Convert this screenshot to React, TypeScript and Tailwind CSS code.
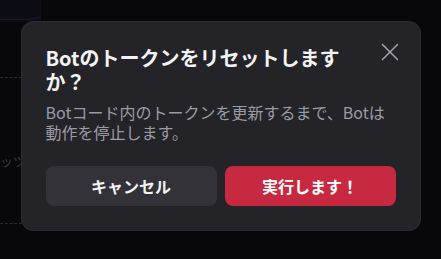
import { X } from 'lucide-react';

export default function App() {
  return (
    <div
      className="relative w-[441px] h-[259px] overflow-hidden bg-[#08080a]"
      style={{ fontFamily: '"Noto Sans CJK JP", "Noto Sans", sans-serif' }}
    >
      {/* faint page behind the backdrop */}
      <div className="absolute inset-y-0 left-0 w-[22px] flex flex-col">
        <div className="relative w-[41px] h-[22px] bg-[#0b0d14] overflow-hidden">
          <div className="absolute left-[-60px] top-[-70px] w-[130px] h-[90px] rounded-full border border-[#1a1e2c]" />
        </div>
        <div className="mt-[55px] border-t border-dashed border-[#2a2a2e]" />
        <div className="mt-[76px] text-[13px] text-[#3a3a3e] leading-none whitespace-nowrap">ッツ</div>
        <div className="mt-[56px] border-t border-dashed border-[#2a2a2e]" />
      </div>

      <div className="relative flex justify-center pt-[21px]">
        <div className="relative w-[400px] rounded-[12px] border border-[#2c2c32] bg-[#232328] p-6">
          <button type="button" className="absolute top-[15px] right-[15px] w-[30px] h-[30px] flex items-center justify-center text-[#a3a3ab]">
            <X size={30} strokeWidth={1.2} />
          </button>
          <h2 className="pr-[40px] text-[20px] leading-[24px] font-bold text-[#f2f3f5]">
            Botのトークンをリセットしますか？
          </h2>
          <p className="mt-2 text-[16px] leading-[20px] text-[#9b9ba4]">
            Botコード内のトークンを更新するまで、Botは動作を停止します。
          </p>
          <div className="mt-6 grid grid-cols-2 gap-2">
            <button type="button" className="h-10 rounded-lg bg-[#323238] text-[16px] font-bold text-[#f2f3f5]">
              キャンセル
            </button>
            <button type="button" className="h-10 rounded-lg bg-[#c72a40] text-[16px] font-bold text-white">
              実行します！
            </button>
          </div>
        </div>
      </div>
    </div>
  );
}
